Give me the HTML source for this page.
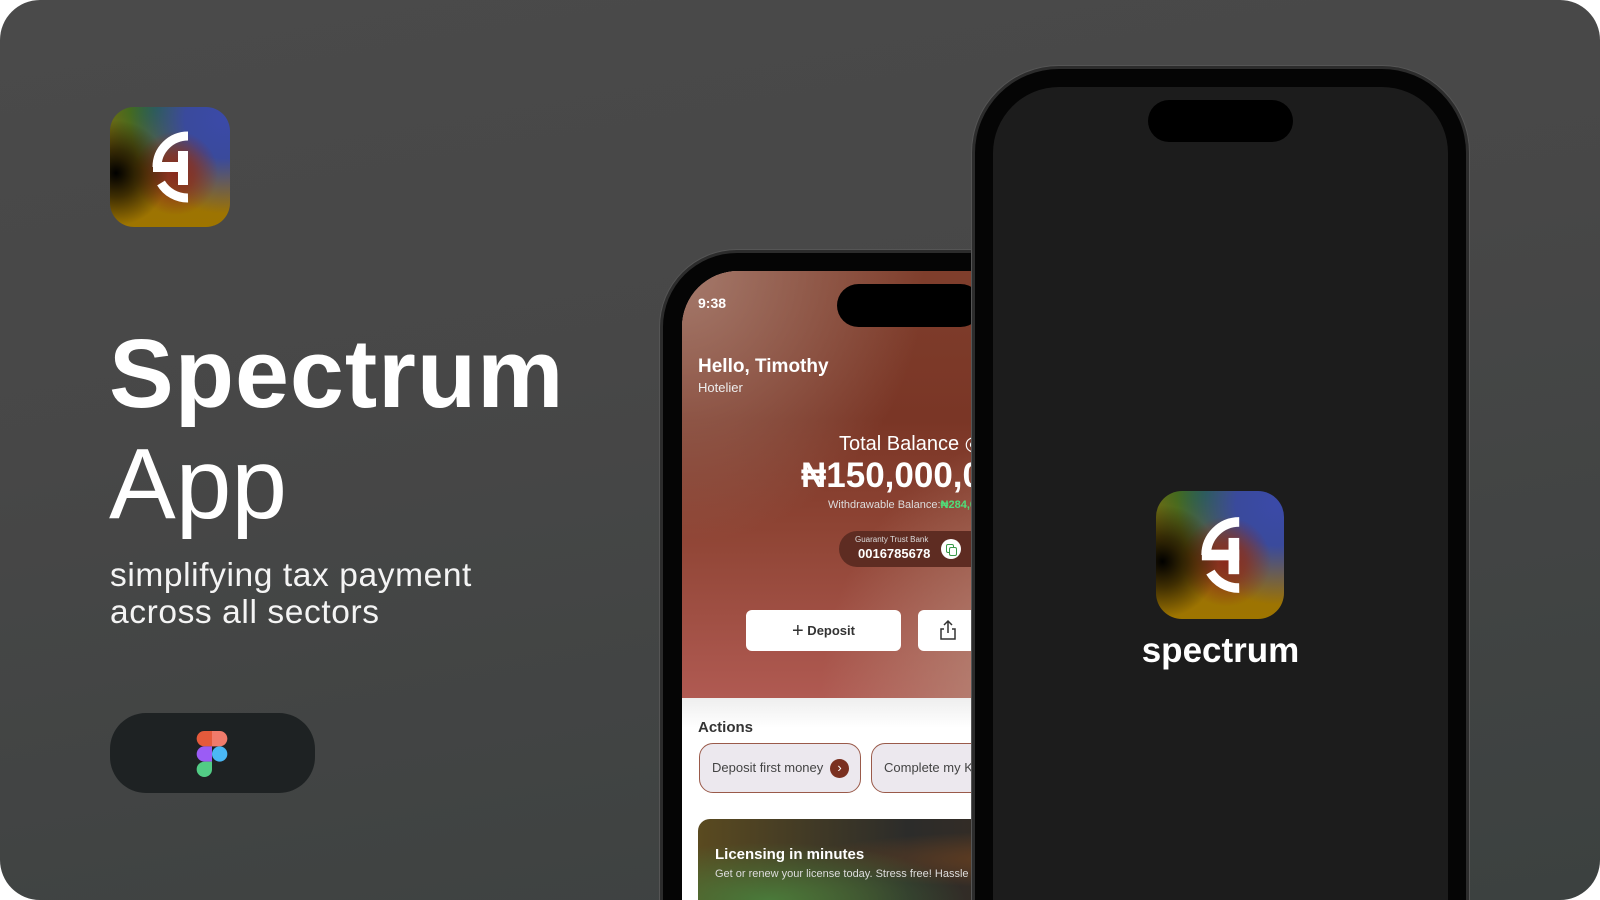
<!DOCTYPE html>
<html><head><meta charset="utf-8">
<style>
*{margin:0;padding:0;box-sizing:border-box}
html,body{width:1600px;height:900px;background:#fff;overflow:hidden;font-family:"Liberation Sans",sans-serif}
#card{position:absolute;left:0;top:0;width:1600px;height:900px;border-radius:40px;overflow:hidden;
background:linear-gradient(170deg,#4a4a4a 0%,#474747 40%,#3c4140 100%)}
.abs{position:absolute}
.icon{border-radius:24px;overflow:hidden;
background:
radial-gradient(circle at 5% 55%,#000 0%,rgba(0,0,0,.6) 18%,rgba(0,0,0,0) 40%),
radial-gradient(circle at 55% 55%,#8a2a1c 0%,rgba(138,42,28,.7) 20%,rgba(138,42,28,0) 45%),
radial-gradient(circle at 95% 10%,#3b4aa8 0%,#3a4a9c 25%,rgba(58,74,156,0) 60%),
radial-gradient(circle at 40% 0%,#1f6a2a 0%,rgba(31,106,42,.6) 20%,rgba(31,106,42,0) 45%),
linear-gradient(180deg,#7a6a10 0%,#9a7008 60%,#9e7500 100%)}
.t{color:#fff;white-space:nowrap}
.phone{background:#050505;box-shadow:0 0 0 3px #2c2c2c,0 0 0 4px #555;overflow:hidden}
</style></head><body>
<div id="card">
  <div class="abs icon" style="left:110px;top:107px;width:120px;height:120px">
    <svg width="120" height="120" viewBox="0 0 120 120" style="position:absolute;left:0;top:0">
      <path d="M78 29 A31 31 0 0 0 47 60" fill="none" stroke="#fff" stroke-width="9"/>
      <rect x="43" y="55" width="35" height="10" fill="#fff"/>
      <rect x="68" y="44" width="10" height="34" fill="#fff"/>
      <path d="M51 76 A31 31 0 0 0 78 91" fill="none" stroke="#fff" stroke-width="9"/>
    </svg>
  </div>
  <div class="abs t" style="left:109px;top:318px;font-size:97px;font-weight:bold;letter-spacing:1px">Spectrum</div>
  <div class="abs t" style="left:109px;top:427px;font-size:100px">App</div>
  <div class="abs t" style="left:110px;top:557px;font-size:33.5px;line-height:37px;color:#f4f4f4;letter-spacing:0.6px">simplifying tax payment<br>across all sectors</div>
  <div class="abs" style="left:110px;top:713px;width:205px;height:80px;border-radius:36px;background:#1e2223">
    <svg class="abs" style="left:86px;top:18px" width="32" height="46" viewBox="0 0 30 45">
      <path d="M15 0H7.5a7.5 7.5 0 0 0 0 15H15z" fill="#e55a3b"/>
      <path d="M15 0h7.5a7.5 7.5 0 0 1 0 15H15z" fill="#f07b6b"/>
      <path d="M15 15H7.5a7.5 7.5 0 0 0 0 15H15z" fill="#9b5cf5"/>
      <circle cx="22.5" cy="22.5" r="7.5" fill="#4ab8f5"/>
      <path d="M15 30H7.5a7.5 7.5 0 1 0 7.5 7.5z" fill="#52cc85"/>
    </svg>
  </div>

  <div class="abs phone" style="left:663px;top:253px;width:420px;height:647px;border-radius:74px 74px 0 0">
    <div class="abs" style="left:19px;top:18px;width:382px;height:629px;border-radius:56px 56px 0 0;overflow:hidden;background:#fff">
      <div class="abs" style="left:0;top:0;width:382px;height:427px;
      background:
      radial-gradient(ellipse at 0% 0%,#a57a6c 0%,rgba(165,122,108,0) 45%),
      radial-gradient(ellipse at 100% 100%,#b89080 0%,rgba(184,144,128,0) 45%),
      linear-gradient(180deg,#7f3e2c 0%,#7a3626 35%,#8e4434 60%,#b05a52 100%)"></div>
      <div class="abs" style="left:0;top:427px;width:382px;height:30px;background:linear-gradient(#eee,#fff)"></div>
      <div class="abs t" style="left:16px;top:24px;font-size:14px;font-weight:bold">9:38</div>
      <div class="abs" style="left:155px;top:13px;width:145px;height:43px;border-radius:22px;background:#000"></div>
      <div class="abs t" style="left:16px;top:85px;font-size:19px;font-weight:bold">Hello, Timothy</div>
      <div class="abs t" style="left:16px;top:109px;font-size:13px;color:#eee">Hotelier</div>
      <div class="abs t" style="left:157px;top:160px;font-size:20px">Total Balance &#9678;</div>
      <div class="abs t" style="left:119px;top:185px;font-size:35px;font-weight:bold">₦150,000,000</div>
      <div class="abs t" style="left:146px;top:228px;font-size:11px;color:#ddd">Withdrawable Balance:<b style="color:#4ee07a">₦284,000</b></div>
      <div class="abs" style="left:157px;top:260px;width:150px;height:36px;border-radius:18px;background:#5e2c22">
        <div class="abs t" style="left:16px;top:4px;font-size:8px;color:#ddd">Guaranty Trust Bank</div>
        <div class="abs t" style="left:19px;top:15px;font-size:13px;font-weight:bold">0016785678</div>
        <div class="abs" style="left:102px;top:8px;width:20px;height:20px;border-radius:50%;background:#fff">
          <div class="abs" style="left:5px;top:5px;width:8px;height:9px;border:1.5px solid #3a9a4a;border-radius:2px"></div>
          <div class="abs" style="left:8px;top:8px;width:8px;height:9px;border:1.5px solid #3a9a4a;border-radius:2px;background:#fff"></div>
        </div>
      </div>
      <div class="abs" style="left:64px;top:339px;width:155px;height:41px;border-radius:6px;background:#fff;font-size:13px;font-weight:bold;color:#333;text-align:center;line-height:41px"><span style="font-size:20px;font-weight:normal;vertical-align:-2px">+</span> Deposit</div>
      <div class="abs" style="left:236px;top:339px;width:155px;height:41px;border-radius:6px;background:#fff"><svg class="abs" style="left:18px;top:8px" width="24" height="24" viewBox="0 0 24 24" fill="none" stroke="#333" stroke-width="1.5"><path d="M12 3v12M8 7l4-4 4 4M8 11H5v10h14V11h-3"/></svg></div>
      <div class="abs" style="left:16px;top:448px;font-size:15px;font-weight:bold;color:#333">Actions</div>
      <div class="abs" style="left:17px;top:472px;width:162px;height:50px;border-radius:14px;border:1.5px solid #9a5a4a;background:#ece8ee">
        <div class="abs" style="left:12px;top:16px;font-size:13px;color:#444;white-space:nowrap">Deposit first money</div>
        <div class="abs" style="left:130px;top:15px;width:19px;height:19px;border-radius:50%;background:#7a3020;color:#fff;font-size:13px;text-align:center;line-height:18px">›</div>
      </div>
      <div class="abs" style="left:189px;top:472px;width:170px;height:50px;border-radius:14px;border:1.5px solid #9a5a4a;background:#ece8ee">
        <div class="abs" style="left:12px;top:16px;font-size:13px;color:#444;white-space:nowrap">Complete my KYC</div>
      </div>
      <div class="abs" style="left:16px;top:548px;width:350px;height:81px;border-radius:12px 12px 0 0;
      background:radial-gradient(ellipse at 20% 100%,#4a7a3a 0%,rgba(74,122,58,0) 50%),radial-gradient(ellipse at 100% 50%,#6a4020 0%,rgba(106,64,32,0) 50%),linear-gradient(90deg,#5a4a20 0%,#2c2c2a 60%,#3a2c22 100%)">
        <div class="abs t" style="left:17px;top:27px;font-size:15px;font-weight:bold">Licensing in minutes</div>
        <div class="abs t" style="left:17px;top:49px;font-size:11px;color:#ddd">Get or renew your license today. Stress free! Hassle free!</div>
      </div>
    </div>
  </div>

  <div class="abs phone" style="left:975px;top:69px;width:491px;height:831px;border-radius:84px 84px 0 0">
    <div class="abs" style="left:18px;top:18px;width:455px;height:813px;border-radius:66px 66px 0 0;background:#1c1c1c"></div>
    <div class="abs" style="left:173px;top:31px;width:145px;height:42px;border-radius:21px;background:#000"></div>
    <div class="abs icon" style="left:181px;top:422px;width:128px;height:128px;border-radius:26px">
      <svg width="128" height="128" viewBox="0 0 120 120" style="position:absolute;left:0;top:0">
        <path d="M78 29 A31 31 0 0 0 47 60" fill="none" stroke="#fff" stroke-width="9"/>
        <rect x="43" y="55" width="35" height="10" fill="#fff"/>
        <rect x="68" y="44" width="10" height="34" fill="#fff"/>
        <path d="M51 76 A31 31 0 0 0 78 91" fill="none" stroke="#fff" stroke-width="9"/>
      </svg>
    </div>
    <div class="abs t" style="left:0;width:491px;text-align:center;top:562px;font-size:35px;font-weight:bold">spectrum</div>
  </div>
</div>
</body></html>
